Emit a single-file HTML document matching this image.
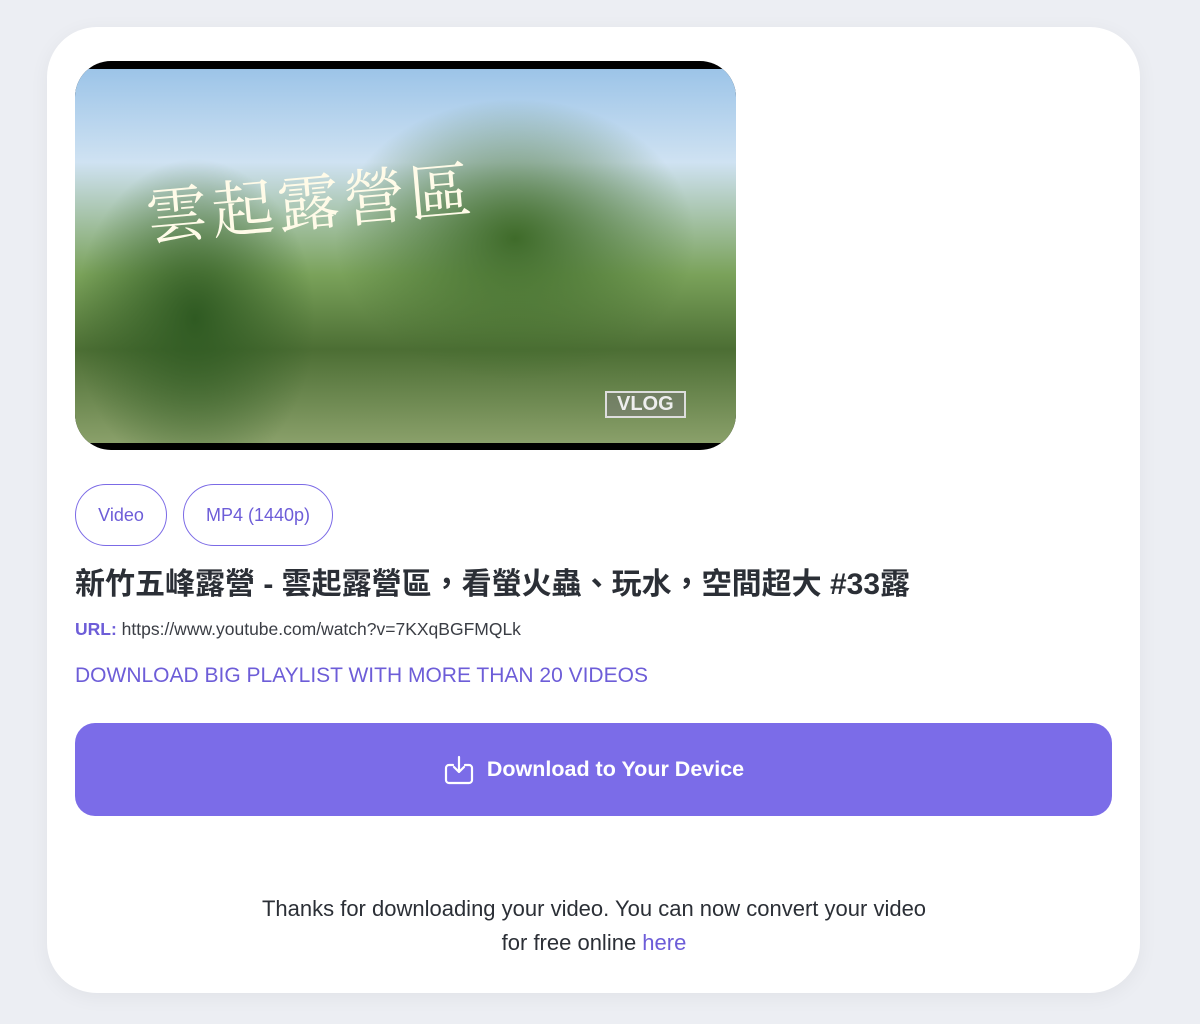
<!DOCTYPE html>
<html><head><meta charset="utf-8"><style>
body{margin:0;width:1200px;height:1024px;background:#eceef3;font-family:"Liberation Sans","Noto Sans CJK TC",sans-serif;overflow:hidden}
.card{position:absolute;left:47px;top:27px;width:1093px;height:966px;background:#fff;border-radius:50px;box-shadow:0 4px 20px rgba(0,0,0,.05)}
.img{position:absolute;left:75px;top:61px;width:661px;height:389px;border-radius:36px;overflow:hidden;background:#000}
.pic{position:absolute;left:0;top:8px;width:661px;height:374px;background:
radial-gradient(ellipse 180px 140px at 440px 170px,#3f6b2a,transparent),
radial-gradient(ellipse 120px 160px at 120px 250px,#2f5a22,transparent),
linear-gradient(180deg,#9cc4e8 0%,#cfe2f2 25%,#7aa25a 55%,#4c6e34 75%,#8aa06a 100%)}
.pic .t{position:absolute;left:70px;top:85px;font-size:62px;color:#fffbe8;font-family:"Noto Serif CJK SC",serif;letter-spacing:4px;transform:rotate(-5deg)}
.pic .v{position:absolute;left:530px;top:322px;color:#eee;font-weight:bold;font-size:20px;border:2px solid #ddd;padding:0 10px;background:rgba(120,120,120,.5)}
.tag{position:absolute;top:484px;height:62px;border:1px solid #7b6ae6;border-radius:31px;color:#6d5dd8;font-size:18px;line-height:60px;text-align:center;box-sizing:border-box}
h1{position:absolute;left:75px;top:565px;margin:0;font-size:30px;line-height:40px;font-weight:bold;color:#2b2f36}
.url{position:absolute;left:75px;top:619px;font-size:17.5px;color:#3a3d44}
.url b{color:#6d5dd8}
.pl{position:absolute;left:75px;top:664px;font-size:21px;color:#6d5dd8}
.btn{position:absolute;left:75px;top:723px;width:1037px;height:93px;background:#7b6ce8;border-radius:20px;color:#fff;font-weight:bold;font-size:21.5px;display:flex;align-items:center;justify-content:center}
.btn svg{margin-right:12px}
.thx{position:absolute;left:144px;width:900px;top:892px;text-align:center;font-size:22px;line-height:34px;color:#2b2f36}
.thx a{color:#6d5dd8;text-decoration:none}
</style></head><body>
<div class="card"></div>
<div class="img"><div class="pic"><div class="t">雲起露營區</div><div class="v">VLOG</div></div></div>
<div class="tag" style="left:75px;width:92px">Video</div>
<div class="tag" style="left:183px;width:150px">MP4 (1440p)</div>
<h1>新竹五峰露營 - 雲起露營區，看螢火蟲、玩水，空間超大 #33露</h1>
<div class="url"><b>URL:</b> https://www.youtube.com/watch?v=7KXqBGFMQLk</div>
<div class="pl">DOWNLOAD BIG PLAYLIST WITH MORE THAN 20 VIDEOS</div>
<div class="btn"><svg width="32" height="32" viewBox="0 0 32 32" fill="none" stroke="#fff" stroke-width="2.2" stroke-linecap="round" stroke-linejoin="round"><path d="M10 11H6a3 3 0 0 0-3 3v12a3 3 0 0 0 3 3h20a3 3 0 0 0 3-3V14a3 3 0 0 0-3-3h-4"/><path d="M16 3v15M11 13l5 5 5-5"/></svg>Download to Your Device</div>
<div class="thx">Thanks for downloading your video. You can now convert your video<br>for free online <a>here</a></div>
</body></html>
